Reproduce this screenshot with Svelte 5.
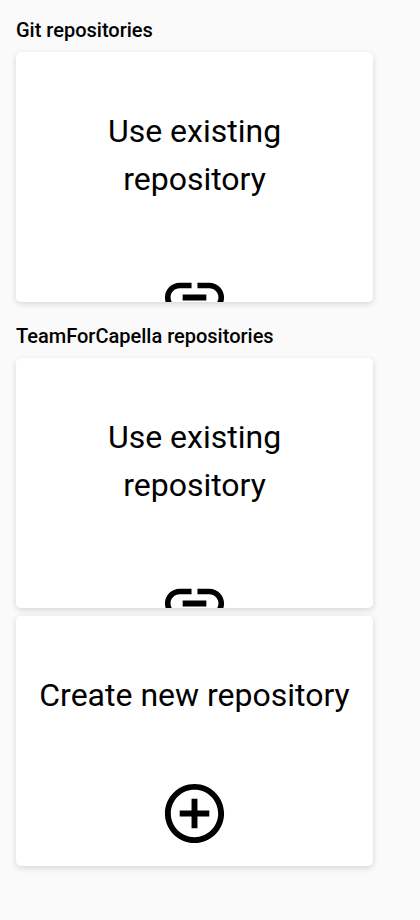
<script>
  const link = 'M3.9 12c0-1.71 1.39-3.1 3.1-3.1h4V7H7c-2.76 0-5 2.24-5 5s2.24 5 5 5h4v-1.9H7c-1.71 0-3.1-1.39-3.1-3.1zM8 13h8v-2H8v2zm9-6h-4v1.9h4c1.71 0 3.1 1.39 3.1 3.1s-1.39 3.1-3.1 3.1h-4V17h4c2.76 0 5-2.24 5-5s-2.24-5-5-5z';
  const add = 'M13 7h-2v4H7v2h4v4h2v-4h4v-2h-4V7zm-1-5C6.48 2 2 6.48 2 12s4.48 10 10 10 10-4.48 10-10S17.52 2 12 2zm0 18c-4.41 0-8-3.59-8-8s3.59-8 8-8 8 3.59 8 8-3.59 8-8 8z';
  const sections = [
    { title: 'Git repositories', cards: [{ label: 'Use existing repository', icon: link }] },
    {
      title: 'TeamForCapella repositories',
      cards: [
        { label: 'Use existing repository', icon: link },
        { label: 'Create new repository', icon: add }
      ]
    }
  ];
</script>

<main>
  {#each sections as section}
    <section>
      <h2>{section.title}</h2>
      <div class="cards">
        {#each section.cards as card}
          <a class="card" href="#repository">
            <span class="label">{card.label}</span>
            <svg viewBox="0 0 24 24" aria-hidden="true"><path d={card.icon} /></svg>
          </a>
        {/each}
      </div>
    </section>
  {/each}
</main>

<style>
  :global(body) {
    margin: 0;
    background: #fafafa;
  }
  main {
    padding: 14px 16px;
    font-family: Roboto, sans-serif;
    color: #000;
    display: flex;
    flex-direction: column;
    gap: 18px;
  }
  h2 {
    margin: 0 0 6px;
    font-size: 20px;
    line-height: 32px;
    font-weight: 500;
  }
  .cards {
    display: flex;
    flex-wrap: wrap;
    gap: 8px;
  }
  .card {
    box-sizing: border-box;
    width: 100%;
    max-width: 357px;
    height: 250px;
    padding: 55px 20px 0;
    overflow: hidden;
    display: flex;
    flex-direction: column;
    align-items: center;
    gap: 59px;
    border-radius: 5px;
    background: #fff;
    color: inherit;
    text-decoration: none;
    box-shadow: 0 2px 6px rgba(0, 0, 0, 0.15);
  }
  .label {
    font-size: 32px;
    line-height: 48px;
    text-align: center;
  }
  svg {
    width: 71px;
    height: 71px;
    flex: none;
    fill: currentColor;
  }
</style>
